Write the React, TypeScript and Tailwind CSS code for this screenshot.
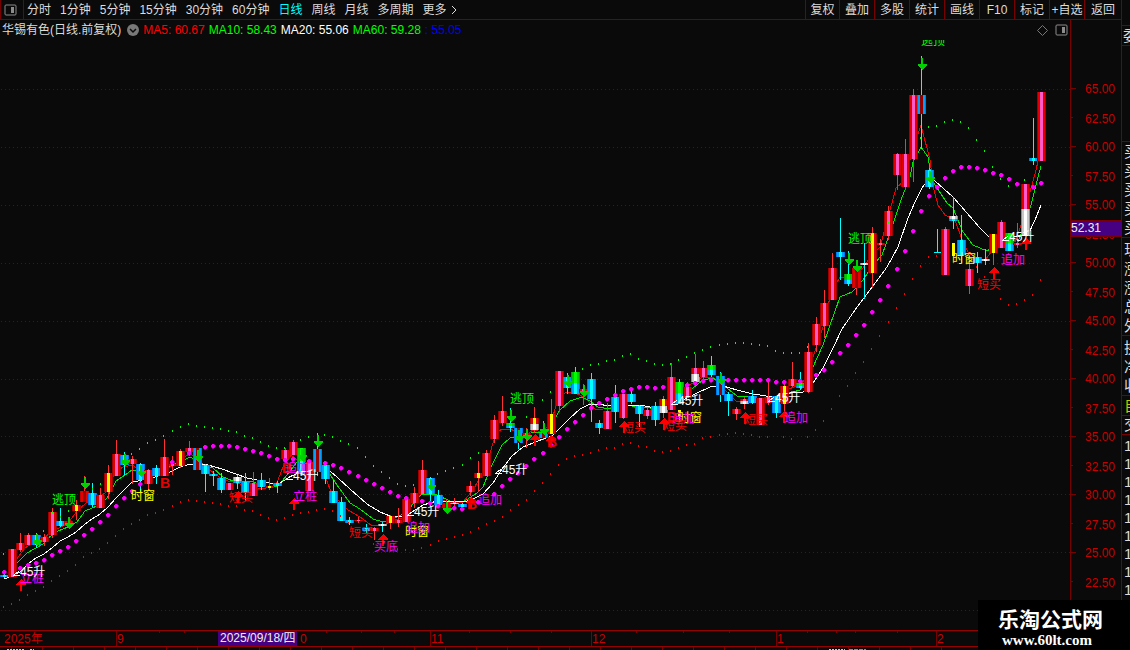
import React, { useState } from "react";

type Kind = "r" | "c" | "y" | "w" | "g" | "d" | "b";
type Candle = [
  x: number,
  high: number,
  low: number,
  kind: Kind,
  top: number,
  bottom: number,
  kind2?: Kind,
  bottom2?: number
];

// edge, inner edge, core
const bodyColors: Record<Kind, [string, string, string]> = {
  r: ["#a00000", "#e00000", "#ff5ac8"],
  c: ["#0078f0", "#00a0ff", "#00ffff"],
  y: ["#a00000", "#e00000", "#ffff00"],
  w: ["#8c8c8c", "#c8c8c8", "#ffffff"],
  g: ["#00a000", "#00c800", "#00ff00"],
  d: ["#c80000", "#e60000", "#960000"],
  b: ["#0078f0", "#00a0ff", "#960000"],
};

const candles: Candle[] = [
  [4, 574, 578, "c", 575, 577],
  [12, 549, 577, "r", 549, 577],
  [20, 533, 552, "r", 543, 550],
  [28, 533, 545, "r", 535, 545],
  [36, 533, 548, "c", 535, 545],
  [44, 534, 546, "r", 537, 542],
  [52, 508, 538, "r", 512, 535],
  [60, 508, 527, "c", 521, 526],
  [68, 517, 528, "d", 521, 526],
  [76, 500, 520, "y", 505, 511],
  [84, 476, 502, "d", 491, 502],
  [92, 483, 507, "c", 493, 505],
  [100, 488, 508, "r", 495, 508],
  [108, 465, 499, "y", 473, 492],
  [116, 440, 476, "r", 454, 476],
  [124, 452, 475, "c", 455, 465],
  [132, 456, 484, "r", 459, 464],
  [140, 463, 493, "c", 464, 480],
  [148, 469, 490, "r", 470, 484],
  [156, 465, 484, "c", 468, 476],
  [164, 439, 476, "r", 457, 476],
  [172, 456, 475, "r", 464, 466],
  [180, 449, 468, "y", 451, 466],
  [189, 441, 456, "r", 448, 452],
  [197, 448, 470, "b", 448, 470],
  [205, 464, 492, "c", 465, 474],
  [213, 471, 486, "c", 474, 476],
  [221, 473, 493, "c", 478, 490],
  [229, 483, 490, "r", 483, 490],
  [237, 475, 489, "w", 477, 481, "c", 483],
  [245, 473, 501, "c", 482, 493],
  [253, 472, 496, "r", 483, 496],
  [261, 473, 490, "c", 480, 487],
  [269, 478, 490, "y", 486, 488],
  [277, 481, 493, "c", 483, 486],
  [285, 448, 460, "r", 450, 459],
  [293, 440, 455, "r", 442, 455],
  [301, 448, 475, "g", 448, 461, "c", 474],
  [309, 462, 491, "r", 462, 491],
  [317, 433, 476, "b", 449, 472],
  [325, 465, 484, "c", 465, 479],
  [333, 480, 503, "c", 491, 503],
  [341, 497, 521, "c", 502, 521],
  [349, 517, 525, "c", 520, 523],
  [358, 517, 523, "r", 520, 521],
  [366, 524, 533, "c", 528, 531],
  [374, 527, 540, "r", 528, 531],
  [382, 522, 532, "w", 524, 526],
  [390, 515, 529, "y", 516, 523],
  [398, 508, 527, "r", 520, 523],
  [406, 499, 522, "r", 499, 522],
  [414, 487, 508, "r", 493, 503],
  [422, 460, 494, "r", 470, 494],
  [430, 477, 507, "c", 478, 494],
  [438, 490, 508, "c", 495, 505],
  [446, 500, 508, "d", 503, 508],
  [454, 498, 507, "r", 502, 503, "w", 504],
  [462, 503, 508, "c", 504, 507],
  [470, 481, 496, "r", 486, 492],
  [478, 461, 492, "y", 473, 478],
  [486, 450, 476, "r", 453, 476],
  [494, 415, 443, "r", 420, 439],
  [502, 396, 426, "r", 411, 423],
  [510, 408, 432, "g", 423, 426, "c", 428],
  [518, 428, 449, "b", 428, 443],
  [526, 428, 448, "r", 433, 436],
  [534, 407, 433, "y", 418, 424, "w", 430],
  [543, 421, 440, "b", 433, 438],
  [551, 399, 434, "y", 414, 434],
  [559, 371, 412, "r", 371, 406],
  [567, 373, 394, "c", 377, 388],
  [575, 367, 394, "g", 372, 383, "c", 394],
  [583, 384, 405, "r", 389, 393],
  [591, 373, 422, "c", 379, 399],
  [599, 420, 434, "c", 423, 428],
  [607, 403, 429, "r", 411, 429],
  [615, 385, 423, "c", 397, 412],
  [623, 394, 419, "r", 394, 418],
  [631, 391, 404, "c", 394, 402],
  [639, 405, 427, "c", 406, 414],
  [647, 408, 419, "r", 410, 416],
  [655, 402, 426, "c", 406, 420],
  [663, 396, 418, "y", 399, 406, "w", 413],
  [671, 363, 410, "r", 377, 410],
  [679, 379, 404, "g", 382, 393, "c", 404],
  [687, 382, 398, "r", 387, 398],
  [695, 354, 383, "r", 368, 374, "w", 382],
  [703, 361, 379, "r", 368, 377],
  [711, 356, 377, "g", 365, 370, "c", 375],
  [720, 372, 402, "b", 376, 395],
  [728, 392, 416, "c", 394, 401],
  [736, 407, 420, "r", 409, 414],
  [744, 397, 409, "r", 399, 401, "w", 404],
  [752, 390, 404, "c", 396, 403],
  [760, 398, 425, "r", 398, 425],
  [768, 380, 405, "r", 397, 403],
  [776, 396, 418, "c", 396, 413],
  [784, 383, 412, "y", 386, 404],
  [792, 362, 387, "r", 379, 386],
  [800, 372, 390, "g", 383, 386, "c", 388],
  [808, 343, 393, "r", 352, 392],
  [816, 317, 352, "r", 324, 345],
  [824, 290, 338, "r", 303, 326],
  [832, 253, 300, "r", 268, 300],
  [840, 218, 280, "c", 252, 257],
  [848, 251, 286, "g", 274, 280, "c", 284],
  [856, 260, 295, "d", 268, 288],
  [864, 243, 299, "w", 263, 265],
  [872, 227, 288, "y", 233, 273],
  [880, 239, 262, "r", 243, 245],
  [888, 206, 240, "r", 211, 236],
  [897, 153, 190, "r", 154, 175],
  [905, 139, 190, "r", 154, 187],
  [913, 89, 182, "r", 95, 159],
  [921, 56, 149, "b", 95, 114],
  [929, 168, 189, "c", 170, 187],
  [945, 227, 275, "r", 229, 275],
  [953, 197, 229, "w", 216, 219, "c", 221],
  [961, 215, 263, "c", 240, 255],
  [969, 255, 294, "r", 269, 286],
  [977, 252, 273, "c", 257, 263],
  [985, 249, 265, "w", 259, 261],
  [993, 234, 265, "y", 234, 253],
  [1001, 220, 248, "r", 222, 248],
  [1009, 233, 251, "g", 233, 243, "c", 251],
  [1017, 223, 248, "r", 243, 245],
  [1025, 184, 235, "r", 184, 209, "w", 235],
  [1033, 118, 165, "c", 158, 161],
  [1041, 92, 161, "r", 92, 161],
];

const ma5 =
  "8,573 13,567 18,557 25,548 33,543 43,540 50,532 61,527 68,523 78,510 86,503 96,500 106,492 115,473 123,467 133,465 141,473 150,477 163,472 173,465 181,460 190,453 200,462 210,470 223,480 233,482 243,485 255,488 266,488 276,485 283,467 291,455 301,463 313,462 323,470 331,492 340,502 348,510 360,517 371,525 385,525 393,520 403,518 411,505 420,495 428,493 436,497 450,503 463,502 473,490 483,472 490,453 496,433 502,429 511,429 523,437 533,430 543,432 551,422 558,400 565,393 572,392 580,395 587,400 596,410 610,408 620,407 630,405 643,412 660,412 670,402 680,390 693,383 703,377 713,377 723,388 736,401 750,402 763,398 773,398 786,390 800,385 807,377 813,357 823,327 831,293 840,277 848,278 863,268 870,257 880,247 886,225 896,188 903,182 913,150 921,125 930,160 934,190 938,205 945,215 955,220 961,237 968,252 978,260 986,259 995,247 1003,235 1015,242 1023,220 1030,192 1036,170 1041,148";

const ma10 =
  "12,572 17,563 27,553 43,544 48,538 58,531 68,527 77,522 85,511 97,506 107,498 116,481 125,475 132,470 143,472 157,472 167,467 180,462 190,457 205,465 213,468 223,477 233,481 253,482 267,487 278,486 287,475 297,462 313,462 327,470 337,485 350,503 360,509 373,519 383,522 397,517 407,512 418,497 423,494 437,495 450,501 463,502 477,493 483,487 491,467 502,445 510,438 523,437 533,432 547,433 555,418 560,410 570,401 582,397 590,401 598,407 610,409 623,405 640,407 650,408 660,410 677,402 693,388 703,380 713,378 723,385 737,396 753,397 767,402 777,400 787,393 800,390 808,380 813,367 823,345 840,297 852,292 863,280 873,265 882,255 890,233 901,200 910,177 913,162 921,147 928,157 932,180 937,188 947,203 953,208 963,232 973,245 987,251 997,245 1007,242 1017,244 1027,220 1033,197 1038,177 1041,166";

const ma20 =
  "4,579 12,576 20,572 28,564 36,558 44,554 52,548 60,541 68,537 76,532 84,525 92,519 100,514 108,507 116,498 124,490 132,482 138,481 155,477 170,472 180,467 190,464 208,465 222,469 233,473 247,478 257,480 270,483 280,483 290,477 302,471 320,471 330,471 338,478 350,489 367,504 380,512 390,516 402,517 412,512 423,505 437,501 453,501 467,501 475,498 483,494 493,483 502,469 512,456 523,447 543,439 552,436 560,428 570,418 580,409 590,404 597,404 610,406 623,405 640,405 650,407 663,407 670,406 683,400 695,394 710,387 723,386 737,390 753,394 773,397 790,393 803,392 813,383 823,368 833,348 842,329 857,307 873,286 887,267 898,247 908,218 915,202 922,188 928,180 935,181 953,197 967,213 980,228 988,236 1002,237 1013,237 1028,235 1035,220 1041,205";

const trendDots: number[][] = [
  [4, 572], [20, 568], [28, 565], [36, 563], [44, 560], [52, 555], [60, 551],
  [68, 547], [76, 541], [84, 535], [92, 529], [100, 522], [108, 515], [116, 506],
  [124, 498], [132, 491], [140, 484], [172, 462], [189, 453], [205, 447],
  [213, 446], [221, 446], [229, 446], [237, 447], [245, 449], [253, 451],
  [261, 453], [269, 456], [277, 459], [285, 460], [293, 459], [309, 461],
  [325, 463], [333, 465], [341, 468], [349, 472], [358, 476], [366, 480],
  [374, 484], [382, 488], [390, 492], [398, 496], [406, 498], [422, 501],
  [430, 503], [438, 506], [454, 508], [462, 509], [478, 502], [494, 494],
  [502, 486], [510, 479], [518, 473], [526, 466], [534, 459], [543, 453],
  [551, 445], [559, 437], [567, 429], [575, 422], [583, 415], [591, 408],
  [599, 403], [607, 399], [615, 395], [623, 391], [631, 389], [639, 387],
  [647, 387], [655, 388], [663, 387], [687, 385], [695, 383], [703, 381],
  [711, 380], [728, 380], [736, 380], [744, 380], [752, 380], [760, 380],
  [768, 380], [776, 382], [784, 382], [800, 381], [816, 375], [824, 370],
  [832, 362], [840, 353], [848, 345], [856, 335], [864, 325], [872, 312],
  [880, 300], [888, 286], [897, 269], [905, 251], [913, 231], [921, 211],
  [929, 196], [937, 187], [945, 178], [953, 171], [961, 167], [969, 167],
  [977, 168], [985, 170], [993, 173], [1001, 175], [1009, 179], [1017, 184],
  [1033, 187], [1041, 183],
];

const upperDots: number[][] = [
  [3, 554], [43, 531], [52, 512], [60, 517], [68, 511], [92, 489], [100, 484],
  [131, 454], [139, 449], [147, 443], [155, 440], [163, 436], [172, 431],
  [180, 427], [188, 424], [196, 426], [204, 427], [212, 428], [220, 429],
  [228, 431], [236, 432], [244, 436], [252, 438], [260, 442], [268, 446],
  [276, 448], [284, 448], [300, 440], [308, 437], [324, 435], [332, 437],
  [340, 441], [348, 444], [357, 448], [365, 457], [373, 466], [381, 472],
  [389, 478], [397, 484], [405, 486], [413, 485], [421, 477], [437, 474],
  [445, 471], [453, 468], [462, 465], [470, 458], [478, 453], [526, 417],
  [542, 400], [550, 392], [582, 369], [590, 365], [598, 364], [606, 361],
  [614, 360], [622, 356], [630, 354], [638, 359], [646, 361], [654, 364],
  [662, 365], [670, 364], [678, 360], [686, 357], [694, 353], [702, 350],
  [710, 347], [719, 345], [727, 344], [735, 343], [743, 343], [751, 344],
  [759, 345], [767, 346], [775, 351], [783, 353], [791, 353], [799, 353],
  [807, 347], [888, 223], [920, 138], [928, 127], [936, 126], [944, 122],
  [952, 120], [960, 122], [968, 128], [976, 140], [984, 151], [992, 167],
  [1000, 179], [1008, 186], [1024, 180],
];

const lowerDots: number[][] = [
  [3, 607], [11, 604], [19, 600], [27, 595], [35, 591], [43, 587], [51, 581],
  [59, 576], [67, 571], [75, 565], [83, 557], [91, 553], [99, 549], [107, 543],
  [115, 536], [123, 529], [131, 524], [139, 520], [147, 515], [155, 513],
  [163, 510], [172, 506], [180, 502], [188, 500], [196, 501], [204, 502],
  [212, 503], [220, 504], [228, 506], [236, 506], [244, 510], [252, 511],
  [260, 515], [268, 518], [276, 520], [284, 518], [292, 515], [300, 513],
  [308, 512], [316, 510], [324, 509], [332, 511], [340, 516], [348, 523],
  [357, 530], [373, 544], [397, 549], [405, 550], [413, 550], [421, 548],
  [430, 545], [438, 541], [446, 539], [454, 537], [462, 535], [470, 532],
  [478, 528], [486, 524], [494, 521], [502, 517], [510, 510], [518, 505],
  [526, 500], [534, 491], [542, 483], [550, 474], [558, 465], [566, 459],
  [574, 456], [582, 455], [590, 453], [598, 450], [606, 448], [614, 448],
  [622, 444], [630, 443], [638, 446], [646, 447], [654, 451], [662, 452],
  [670, 451], [678, 448], [686, 445], [694, 444], [702, 438], [710, 437],
  [719, 435], [727, 434], [735, 433], [743, 434], [751, 435], [759, 437],
  [767, 437], [783, 437], [791, 439], [807, 437], [815, 430], [823, 421],
  [831, 409], [839, 396], [847, 386], [855, 373], [863, 362], [871, 349],
  [879, 336], [888, 322], [896, 308], [904, 294], [912, 279], [920, 266],
  [928, 257], [936, 256], [976, 267], [984, 277], [1000, 299], [1008, 305],
  [1016, 304], [1024, 300], [1032, 295], [1040, 280],
];

const sellArrows: number[][] = [
  [37, 534], [69, 517], [85, 477], [125, 454], [141, 465], [198, 450],
  [302, 449], [318, 435], [431, 479], [447, 502], [511, 410], [519, 430],
  [527, 429], [544, 423], [568, 375], [584, 385], [721, 373], [849, 253],
  [857, 260], [922, 58], [930, 171],
];

const buyArrows: number[][] = [
  [21, 579], [238, 491], [294, 498], [383, 534], [471, 497], [535, 434],
  [551, 435], [624, 421], [664, 418], [745, 412], [784, 411], [994, 267],
  [1026, 238],
];

const labels: [string, number, number, string][] = [
  ["逃顶", 52, 504, "#00ff00"],
  ["逃顶", 510, 403, "#00ff00"],
  ["逃顶", 848, 243, "#00ff00"],
  ["逃顶", 921, 45, "#00ff00"],
  ["时窗", 131, 500, "#ffff00"],
  ["时窗", 405, 536, "#ffff00"],
  ["时窗", 678, 422, "#ffff00"],
  ["时窗", 952, 263, "#ffff00"],
  ["立桩", 20, 583, "#ff00ff"],
  ["立桩", 293, 501, "#ff00ff"],
  ["追加", 285, 472, "#ff00ff"],
  ["追加", 406, 532, "#ff00ff"],
  ["追加", 478, 504, "#ff00ff"],
  ["追加", 671, 423, "#ff00ff"],
  ["追加", 784, 422, "#ff00ff"],
  ["追加", 1001, 264, "#ff00ff"],
  ["买底", 374, 551, "#ff00ff"],
  ["短买", 229, 502, "#ff0000"],
  ["短买", 349, 537, "#ff0000"],
  ["短买", 622, 432, "#ff0000"],
  ["短买", 663, 430, "#ff0000"],
  ["短买", 744, 424, "#ff0000"],
  ["短买", 977, 289, "#ff0000"],
];

const buyLetters = [[160, 488], [282, 473], [467, 509], [547, 447], [667, 422]];

const angleMarks = [
  [14, 576], [287, 480], [408, 516], [496, 474], [672, 405], [769, 402], [1003, 241],
];

const priceTicks = [
  65, 62.5, 60, 57.5, 55, 52.5, 50, 47.5, 45, 42.5, 40, 37.5, 35, 32.5, 30, 27.5,
  25, 22.5,
];
const priceY = (price: number) => Math.round(843 - price * 11.6);

const months: [string, number][] = [["9", 116], ["11", 430], ["12", 591], ["1", 776], ["2", 936]];
const weekTicks = [159, 184, 326, 361, 394, 469, 510, 551, 636, 683, 729, 807, 836, 855, 897];

const periods = [
  "分时", "1分钟", "5分钟", "15分钟", "30分钟", "60分钟", "日线", "周线", "月线", "多周期",
];
const tools = ["叠加", "多股", "统计", "画线", "F10", "标记", "+自选"];

function PanelIcon() {
  return (
    <svg width="13" height="12" viewBox="0 0 13 12" className="shrink-0">
      <rect x="1" y="1" width="11" height="10" rx="1" fill="none" stroke="#8c8c8c" />
      <rect x="7" y="3" width="3" height="6" fill="#8c8c8c" />
    </svg>
  );
}

function Toolbar() {
  const [active, setActive] = useState("日线");

  return (
    <nav className="flex h-5 items-stretch border-b border-[#780000] text-[#dcdcdc]">
      <button
        aria-label="侧栏"
        className="flex w-6 items-center border-x border-[#780000] pl-[3px]"
      >
        <PanelIcon />
      </button>
      <div className="flex flex-1 items-center gap-[9px] pl-[3px] whitespace-nowrap">
        {periods.map((item) => (
          <button
            key={item}
            onClick={() => setActive(item)}
            className={item === active ? "text-[#00ffff]" : ""}
          >
            {item}
          </button>
        ))}
        <button className="flex items-center gap-1">
          更多
          <svg width="6" height="10" viewBox="0 0 6 10" fill="none" stroke="#dcdcdc">
            <path d="M1 1 L5 5 L1 9" />
          </svg>
        </button>
      </div>
      <div className="flex whitespace-nowrap">
        <button className="w-[34px] border-l border-[#780000]">复权</button>
        {tools.map((item) => (
          <button key={item} className="w-[35px] border-l border-[#780000]">
            {item}
          </button>
        ))}
        <button className="w-[37px] border-l border-[#780000]">返回</button>
      </div>
    </nav>
  );
}

function TitleRow() {
  return (
    <div className="flex h-5 whitespace-nowrap">
      <div className="flex flex-1 items-center gap-1 pl-0.5">
        <h1 className="pr-0.5 text-[#dcdcdc]">华锡有色(日线.前复权)</h1>
        <button aria-label="展开" className="flex">
          <svg width="12" height="12" viewBox="0 0 12 12">
            <circle cx="6" cy="6" r="6" fill="#787878" />
            <path d="M3 5 L6 8 L9 5" fill="none" stroke="#0a0a0a" strokeWidth="1.5" />
          </svg>
        </button>
        <span className="text-[#ff0000]">MA5: 60.67</span>
        <span className="text-[#00ff00]">MA10: 58.43</span>
        <span className="text-white">MA20: 55.06</span>
        <span className="text-[#00ff00]">MA60: 59.28</span>
        <span className="text-[#0000ff]">: 55.05</span>
      </div>
      <div className="flex items-center gap-[7px] pr-0.5">
        <svg width="11" height="11" viewBox="0 0 11 11" fill="none" stroke="#787878">
          <path d="M5.5 0.5 L10.5 5.5 L5.5 10.5 L0.5 5.5 Z" />
        </svg>
        <PanelIcon />
      </div>
      <div className="w-[51px] border-l border-[#780000]" />
    </div>
  );
}

function CandleShape({ candle }: { candle: Candle }) {
  const [x, high, low, kind, top, bottom, kind2, bottom2] = candle;
  const wick = "ryd".includes(kind) ? "#ff3232" : "#00ffff";

  const body = (k: Kind, from: number, to: number) => {
    const [edge, inner, core] = bodyColors[k];
    const h = Math.max(to - from, 1);
    return (
      <>
        <rect x={x - 4} y={from} width="9" height={h} fill={edge} />
        <rect x={x - 3} y={from} width="7" height={h} fill={inner} />
        <rect x={x - 1} y={from} width="3" height={h} fill={core} />
      </>
    );
  };

  return (
    <g>
      <rect x={x} y={high} width="1" height={low - high} fill={wick} />
      {body(kind, top, bottom)}
      {kind2 && bottom2 && body(kind2, bottom, bottom2)}
    </g>
  );
}

function Chart() {
  return (
    <svg
      viewBox="0 40 1121 610"
      className="block h-auto w-full"
      shapeRendering="crispEdges"
      fontSize="12"
    >
      {/* grid */}
      {[89, 147, 205, 263, 321, 379, 436, 494, 552, 610].map((y) => (
        <path key={y} d={`M1 ${y}.5 H1070`} stroke="#780000" strokeDasharray="1 3" />
      ))}

      {/* averages */}
      <polyline points={ma5} fill="none" stroke="#f00000" />
      <polyline points={ma10} fill="none" stroke="#00e600" />
      <polyline points={ma20} fill="none" stroke="#ffffff" />

      {candles.map((candle) => (
        <CandleShape key={candle[0]} candle={candle} />
      ))}
      <path d="M937.5 229 V253 M934 252.5 H941" stroke="#00ffff" />
      <rect x="952" y="243" width="3" height="13" fill="#ffff00" />
      <rect x="678" y="410" width="3" height="7" fill="#ffff00" />
      <rect x="131" y="489" width="2" height="5" fill="#ffff00" />

      {/* bands */}
      {upperDots.map(([x, y]) => (
        <rect key={x} x={x} y={y - 1} width="1" height="2" fill="#00ff00" />
      ))}
      {lowerDots.map(([x, y]) => (
        <rect key={x} x={x} y={y - 1} width="1" height="2" fill="#ff0000" />
      ))}
      {trendDots.map(([x, y]) => (
        <path
          key={x}
          d={`M${x - 1} ${y - 2}h2v1h1v2h-1v1h-2v-1h-1v-2h1z`}
          fill="#ff00ff"
          stroke="#ff00ff"
          strokeWidth="0.5"
        />
      ))}

      {/* signals */}
      {sellArrows.map(([x, y]) => (
        <path key={x} d={`M${x - 1} ${y}h2v6h4v1l-4 5h-1l-4 -5v-1h3z`} fill="#00d200" />
      ))}
      {buyArrows.map(([x, y]) => (
        <path key={x} d={`M${x} ${y}h1l4 5v1h-4v6h-2v-6h-4v-1z`} fill="#ff0000" />
      ))}
      {buyLetters.map(([x, y]) => (
        <text key={x} x={x} y={y} fontSize="14" fontWeight="bold" fill="#e60000">
          B
        </text>
      ))}
      {labels.map(([text, x, y, color]) => (
        <text key={text + x} x={x} y={y} fill={color}>
          {text}
        </text>
      ))}
      {angleMarks.map(([x, y]) => (
        <g key={x}>
          <path d={`M${x + 5} ${y - 5} L${x} ${y - 1} H${x + 6}`} fill="none" stroke="#ffffff" />
          <text x={x + 6} y={y} fill="#ffffff">
            45升
          </text>
        </g>
      ))}

      {/* price axis */}
      <path d="M1070.5 40 V630" stroke="#780000" />
      {priceTicks.map((price) => (
        <g key={price}>
          <path
            d={`M1071 ${priceY(price) - 0.5} h${price % 5 === 0 ? 5 : 2}`}
            stroke="#780000"
          />
          <text
            x="1085"
            y={priceY(price) + (price % 5 === 0 ? 4 : 5)}
            fill="#c80000"
          >
            {price.toFixed(2)}
          </text>
        </g>
      ))}
      <rect x="1071" y="220" width="50" height="16" fill="#460082" />
      <path d="M1070 220.5 H1121 M1070 236.5 H1121" stroke="#780000" />
      <text x="1071" y="232" fill="#f0f0f0">
        52.31
      </text>

      {/* time axis */}
      <path d="M0 630.5 H1121 M0 646.5 H1121" stroke="#960000" />
      <text x="4" y="643" fill="#c80000">
        2025年
      </text>
      {weekTicks.map((x) => (
        <path key={x} d={`M${x}.5 631 v2`} stroke="#780000" />
      ))}
      {months.map(([text, x]) => (
        <g key={text}>
          <path d={`M${x}.5 631 V646`} stroke="#780000" />
          <text x={x + 1} y="643" fill="#c80000">
            {text}
          </text>
        </g>
      ))}
      <text x="300" y="643" fill="#c80000">
        0
      </text>
      <rect x="218" y="631" width="79" height="15" fill="#460082" />
      <text x="220" y="642" fill="#f0f0f0">
        2025/09/18/四
      </text>
      {Array.from({ length: 31 }, (_, i) => (
        <path key={i} d={`M${11 + i * 31}.5 647 V650`} stroke="#780000" />
      ))}
      <path d="M7 649.5 H24 M30 649.5 H34 M829 649.5 H845" stroke="#c8c8c8" strokeDasharray="2 1" />
      <path d="M849 649.5 H866" stroke="#00c8c8" strokeDasharray="4 1" />
    </svg>
  );
}

function QuoteStrip() {
  const group = "flex flex-col border-b border-[#780000] pl-0.5";
  return (
    <aside className="w-[9px] shrink-0 overflow-hidden border-l border-[#780000] text-[15px] leading-[19px] whitespace-nowrap text-[#dcdcdc]">
      <div className="mt-[25px] border-y border-[#780000] pl-px">委</div>
      <div className="h-24 border-b border-[#780000]" />
      <div className={group}>
        {[1, 2, 3, 4, 5].map((n) => (
          <span key={n}>买</span>
        ))}
      </div>
      <div className={`${group} pt-0.5`}>
        <span>现</span>
        <span>涨</span>
        <span>涨</span>
        <span>总</span>
        <span>外</span>
      </div>
      <div className={`${group} pt-0.5`}>
        <span>换</span>
        <span>净</span>
        <span>收</span>
      </div>
      <div className={`${group} text-[#c8c800]`}>自</div>
      <div className={`${group} leading-[18px]`}>交</div>
      <div className="flex flex-col pt-0.5 pl-0.5 leading-[18px]">
        {[1, 2, 3, 4, 5, 6, 7, 8, 9].map((n) => (
          <span key={n}>1</span>
        ))}
      </div>
    </aside>
  );
}

function App() {
  return (
    <div className="relative flex w-full items-stretch overflow-hidden bg-[#0a0a0a] font-['Liberation_Sans','Noto_Sans_CJK_SC',sans-serif] text-[12px] leading-4">
      <main className="min-w-0 flex-1">
        <Toolbar />
        <TitleRow />
        <Chart />
      </main>
      <QuoteStrip />
      <a
        href="#"
        className="absolute right-0 bottom-0 flex h-[50px] w-[152px] flex-col justify-end bg-black pb-0.5 pl-5 text-white"
      >
        <span className="text-[21px] leading-6 font-bold">乐淘公式网</span>
        <span className="pl-1 font-['Liberation_Serif',serif] text-[15px] leading-4 font-bold">
          www.60lt.com
        </span>
      </a>
    </div>
  );
}

export default App;
